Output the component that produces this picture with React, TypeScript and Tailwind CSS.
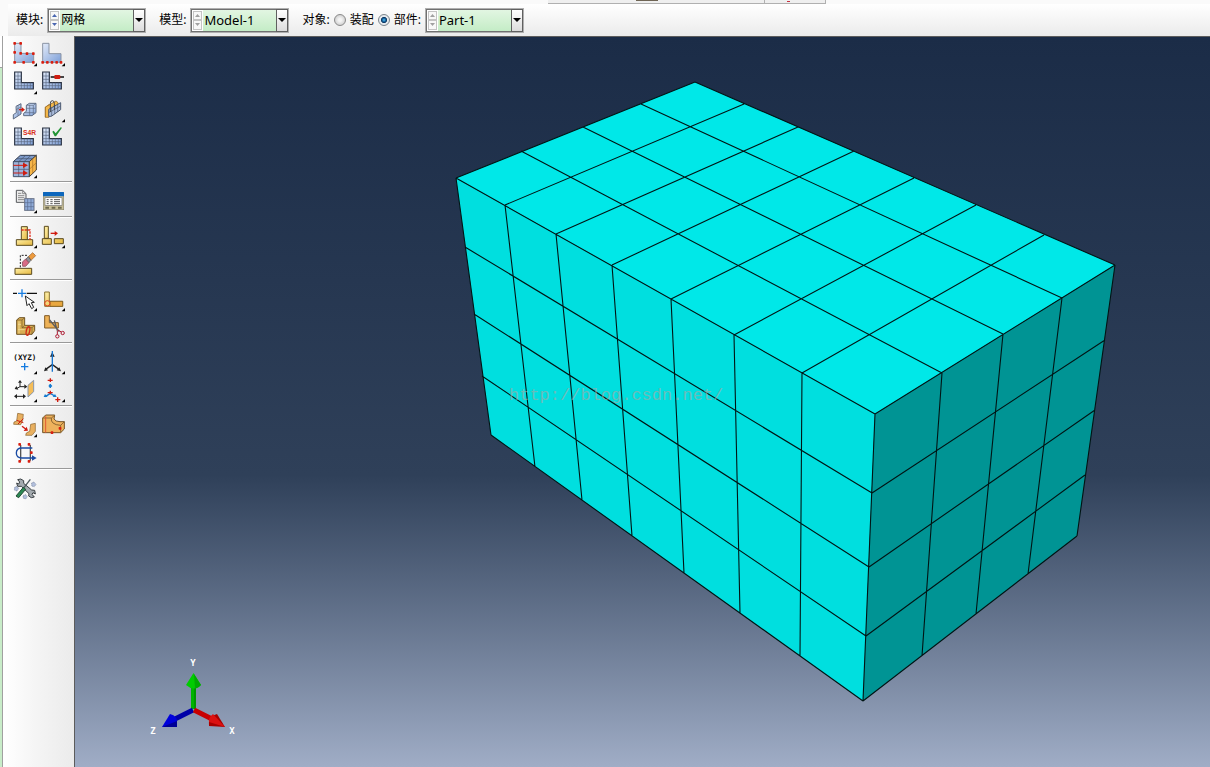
import { useState, type ReactNode } from "react";

type Point = [number, number];

const line = (a: Point, b: Point) => `M${a[0]} ${a[1]}L${b[0]} ${b[1]}`;
const poly = (pts: Point[]) => pts.map((p) => p.join(",")).join(" ");

/* Mesh nodes along the edges of the block. */
const topLeft: Point[] = [[456, 178], [505, 205], [556, 234], [612, 265], [671, 299], [734, 335], [802, 373], [875, 414]];
const topRight: Point[] = [[695, 82], [744, 104], [798, 127], [854, 151], [914, 178], [976, 205], [1044, 235], [1115, 265]];
const backEdge: Point[] = [[456, 178], [521, 151], [583, 127], [641, 104], [695, 82]];
const frontEdge: Point[] = [[875, 414], [942, 373], [1003, 334], [1062, 298], [1115, 265]];
const bottomLeft: Point[] = [[491, 435], [535, 467], [582, 500], [632, 536], [684, 573], [740, 613], [800, 656], [863, 701]];
const bottomRight: Point[] = [[863, 701], [922, 656], [976, 614], [1028, 574], [1077, 536]];
const leftPost: Point[] = [[456, 178], [465, 247], [474, 314], [482, 376], [491, 435]];
const midPost: Point[] = [[875, 414], [872, 493], [869, 567], [866, 636], [863, 701]];
const rightPost: Point[] = [[1115, 265], [1105, 340], [1095, 410], [1085, 475], [1077, 536]];

const meshLines = [
  ...topLeft.map((p, i) => line(p, topRight[i])),
  ...backEdge.map((p, i) => line(p, frontEdge[i])),
  ...topLeft.map((p, i) => line(p, bottomLeft[i])),
  ...frontEdge.map((p, i) => line(p, bottomRight[i])),
  ...leftPost.map((p, i) => line(p, midPost[i])),
  ...midPost.map((p, i) => line(p, rightPost[i])),
].join("");

function Scene() {
  return (
    <svg viewBox="75 37 1135 730" className="block h-full w-full" role="img" aria-label="Part-1">
      <polygon points={poly([topLeft[0], topRight[0], topRight[7], topLeft[7]])} fill="#00e8e8" />
      <polygon points={poly([topLeft[0], topLeft[7], bottomLeft[7], bottomLeft[0]])} fill="#00dfdf" />
      <polygon points={poly([topLeft[7], topRight[7], rightPost[4], midPost[4]])} fill="#009494" />
      <path d={meshLines} stroke="#001414" strokeWidth="1.1" fill="none" />
      <text x="509" y="400" fontSize="17" fill="#a4a8a4" fillOpacity="0.65" className="font-['Liberation_Mono',monospace]">
        http://blog.csdn.net/
      </text>
      <g>
        <path d="M193.500 709V684" stroke="#00b400" strokeWidth="5" />
        <path d="M195 709V684" stroke="#008c00" strokeWidth="1.500" />
        <path d="M193.500 673L201 685Q194 692 186 685Z" fill="#00cc00" />
        <path d="M194 674L201 685Q198 689 195 688Z" fill="#00a800" />
        <path d="M193 710L175 719" stroke="#0000a8" strokeWidth="5" />
        <path d="M162 727L170 714Q178 715 177 726Z" fill="#0000dc" />
        <path d="M162 727L177 721L177 727Z" fill="#000096" />
        <path d="M194 710L212 719" stroke="#c80000" strokeWidth="5" />
        <path d="M225 727L217 714Q208 716 209 726Z" fill="#a80000" />
        <path d="M225 727L213 714Q208 718 209 722Z" fill="#dc1010" />
      </g>
      <g fill="#fff" fontSize="9" fontWeight="bold" textAnchor="middle" className="font-['DejaVu_Sans_Mono',monospace]">
        <text x="193" y="666">Y</text>
        <text x="153" y="734">Z</text>
        <text x="232" y="734">X</text>
      </g>
    </svg>
  );
}

/* Icons are drawn on an 84-unit cell whose origin is (x, y). */
interface Tool {
  label: string;
  y: number;
  more?: boolean;
  art: ReactNode;
}

const dots = (pts: Point[]) => pts.map(([x, y]) => <rect key={`${x}-${y}`} x={x - 4} y={y - 4} width="8" height="8" rx="2" fill="#d81e10" />);

function MeshL({ x, y }: { x: number; y: number }) {
  return (
    <g transform={`translate(${x} ${y})`}>
      <path d="M2 2H22V34H58V53H2Z" fill="url(#blue)" stroke="#283040" strokeWidth="3.500" />
      <path d="M12 2V53M2 14H22M2 24H22M2 34H22M2 43H58M22 34V53M31 34V53M40 34V53M49 34V53" stroke="#59677f" strokeWidth="2" fill="none" />
    </g>
  );
}

const red = "#d01c10";

const groups: Tool[][] = [
  [
    {
      label: "Seed Part", y: 12, more: true,
      art: (
        <>
          <path d="M44 22H63V52H101V79H44Z" fill="url(#blue)" stroke="#8a93a3" strokeWidth="3" />
          {dots([[44, 22], [62, 22], [44, 49], [62, 52], [81, 53], [100, 53], [44, 79], [71, 79], [100, 79]])}
        </>
      ),
    },
    {
      label: "Seed Edges", y: 12, more: true,
      art: (
        <>
          <path d="M128 22H147V53H183V79H128Z" fill="url(#blue)" stroke="#8a93a3" strokeWidth="3" />
          {dots([[128, 79], [142, 79], [156, 79], [170, 79], [183, 79]])}
        </>
      ),
    },
    { label: "Mesh Part", y: 96, more: true, art: <MeshL x={42} y={106} /> },
    {
      label: "Edit Mesh", y: 96,
      art: (
        <>
          <MeshL x={126} y={106} />
          <path d="M152 123H192" stroke="#222" strokeWidth="5" />
          <rect x="163" y="117" width="18" height="12" rx="3" fill={red} />
        </>
      ),
    },
    {
      label: "Associate Mesh", y: -36,
      art: (
        <>
          <path d="M48 -5L63 -13V18L40 33V20L49 14Z" fill="url(#blue)" stroke="#5d6b83" strokeWidth="3" />
          <path d="M79 -8L88 -14H108V14L96 23H71V16L79 10Z" fill="url(#blue)" stroke="#5d6b83" strokeWidth="3" />
          <path d="M79 -8H100V20M89 -10V22M79 1H106M74 14H104M100 -8L108 -14M54 -9V22M48 5L63 -3" stroke="#5d6b83" strokeWidth="2" fill="none" />
          <path d="M57 5H67" stroke={red} strokeWidth="4" />
          <path d="M65 -3L75 5L65 12Z" fill={red} />
        </>
      ),
    },
    {
      label: "Create Bottom-Up Mesh", y: -36, more: true,
      art: (
        <>
          <path d="M136 -2L147 -10V18L136 27Z" fill="#f0aa35" stroke="#8a5a18" strokeWidth="2" />
          <path d="M136 -3L168 -21L174 -16V-8L147 6V28H136Z" fill="#f4b84b" stroke="#8a5a18" strokeWidth="2" />
          <path d="M146 4L182 -16V5L154 25H146Z" fill="#a9bbdc" stroke="#4d5a70" strokeWidth="3" />
          <path d="M146 14L182 -6M155 -1V24M164 -6V18M173 -11V12" stroke="#4d5a70" strokeWidth="2" />
          <path d="M151 12V-13Q151 -22 157 -22T163 -13V6" fill="none" stroke="#3f4146" strokeWidth="3" />
        </>
      ),
    },
    {
      label: "Assign Element Type", y: 48,
      art: (
        <>
          <MeshL x={42} y={58} />
          <text x="69" y="81" fontSize="20" fontWeight="bold" fill="#d83020" className="font-['Liberation_Sans',sans-serif]">S4R</text>
        </>
      ),
    },
    {
      label: "Verify Mesh", y: 48,
      art: (
        <>
          <MeshL x={126} y={58} />
          <path d="M157 71L161 68L167 76L182 58L186 59L168 85H164Z" fill="#219434" />
        </>
      ),
    },
    {
      label: "Mesh Region", y: 132, more: true,
      art: (
        <>
          <path d="M40 161L61 142H109L88 161Z" fill="#7d99c8" stroke="#333d50" strokeWidth="3" />
          <path d="M40 161H88V206H40Z" fill="#9db4dc" stroke="#45536b" strokeWidth="3" />
          <path d="M88 161L109 142V186L88 206Z" fill="#f6b64a" stroke="#45413b" strokeWidth="3" />
          <path d="M56 161V206M72 161V206M40 184H88M56 161L77 142M72 161L93 142M50 152H98" stroke="#45536b" strokeWidth="2" />
          <path d="M98 152V196M88 184L109 164" stroke="#ad7324" strokeWidth="2" />
          <path d="M40 172H75M40 195H75" stroke={red} strokeWidth="3" />
          <path d="M69 164L84 172L69 180ZM69 187L84 195L69 203Z" fill={red} />
        </>
      ),
    },
  ],
  [
    {
      label: "Mesh Controls", y: 21, more: true,
      art: (
        <>
          <path d="M49 31H68L78 41V67H49Z" fill="#eee" stroke="#56585c" strokeWidth="3" />
          <path d="M68 31V41H78M54 40H64M54 47H73M54 53H73M54 59H73" stroke="#777" strokeWidth="2.500" fill="none" />
          <rect x="74" y="56" width="28" height="35" fill="#8fabd9" stroke="#6a7387" strokeWidth="3" />
          <path d="M83 56V91M93 56V91M74 68H102M74 80H102" stroke="#5a6b8c" strokeWidth="2" />
        </>
      ),
    },
    {
      label: "Manager", y: 21,
      art: (
        <>
          <rect x="130" y="37" width="61" height="52" fill="#c8bf98" stroke="#8c8669" strokeWidth="2" />
          <rect x="129" y="36" width="63" height="13" rx="2" fill="#0d67bd" />
          <rect x="135" y="53" width="51" height="23" fill="#fff" stroke="#777" strokeWidth="2" />
          <path d="M140 59H146M140 65H146M140 71H146M151 59H158M151 65H158M151 71H158M162 59H180M162 65H180M162 71H180" stroke="#555" strokeWidth="3" />
          <path d="M136 83H147M155 83H166M174 83H185" stroke="#6e6a4e" strokeWidth="6" />
        </>
      ),
    },
  ],
  [
    {
      label: "Create Partition", y: 126, more: true,
      art: (
        <>
          <path d="M64 140H82V180H64Z" fill="url(#gold)" stroke="#5b4b20" strokeWidth="3" />
          <path d="M49 179H98V196H49Z" fill="url(#gold)" stroke="#5b4b20" strokeWidth="3" />
          <path d="M64 150H90V180" fill="none" stroke="#e03020" strokeWidth="4" strokeDasharray="7 3" />
        </>
      ),
    },
    {
      label: "Split Feature", y: 126, more: true,
      art: (
        <>
          <path d="M133 139H145V175H133ZM127 176H154V193H127ZM163 176H190V191H163Z" fill="url(#gold)" stroke="#5b4b20" strokeWidth="3" />
          <path d="M152 160H168" stroke={red} strokeWidth="4" />
          <path d="M164 153L174 160L164 168Z" fill={red} />
        </>
      ),
    },
    {
      label: "Erase Feature", y: 210,
      art: (
        <>
          <path d="M45 265H95V283H45Z" fill="url(#gold)" stroke="#5b4b20" strokeWidth="3" />
          <path d="M61 262V226H82" fill="none" stroke="#222" strokeWidth="3" strokeDasharray="6 4" />
          <path d="M85 230L98 218L107 227L93 241Z" fill="#ed9b3d" stroke="#955b25" strokeWidth="2" />
          <path d="M77 238L85 230L93 241L85 249Z" fill="#8f9197" stroke="#4a4a4a" strokeWidth="2" />
          <path d="M67 246L77 237L87 248L77 259H68Z" fill="#d96c86" stroke="#793f4d" strokeWidth="2" />
        </>
      ),
    },
  ],
  [
    {
      label: "Select Edge", y: 21, more: true,
      art: (
        <>
          <path d="M39 46H51M80 46H111" stroke="#111" strokeWidth="4" />
          <path d="M54 46H78M66 34V58" stroke="#157be0" strokeWidth="4" />
          <path d="M76 54L81 83L87 77L95 92L101 88L94 74L103 73Z" fill="#fff" stroke="#222" strokeWidth="3" />
        </>
      ),
    },
    {
      label: "Combine Edges", y: 21, more: true,
      art: (
        <>
          <path d="M134 42H148V70H188V85H134Z" fill="url(#gold)" stroke="#8a7330" strokeWidth="3" />
          <path d="M150 70H188V85H150Z" fill="#e9a83f" stroke="#6e5120" strokeWidth="2" />
          <circle cx="142" cy="76" r="8" fill="none" stroke="#e23a1c" strokeWidth="3" />
        </>
      ),
    },
    {
      label: "Partition Cell", y: 105, more: true,
      art: (
        <>
          <path d="M50 126L58 119H74V142H104V158L96 169H50Z" fill="#d8ae53" stroke="#705526" strokeWidth="3" />
          <path d="M50 126H66V149H96V169M66 126L74 119M66 149L74 142M96 149L104 142" fill="none" stroke="#705526" strokeWidth="2" />
          <path d="M57 130V166M54 139H63M54 155H74" stroke="#efd78f" strokeWidth="3" />
          <ellipse cx="84" cy="159" rx="5" ry="13" transform="rotate(12 84 159)" fill="none" stroke="#d22c16" strokeWidth="4" />
        </>
      ),
    },
    {
      label: "Trim Feature", y: 105,
      art: (
        <>
          <path d="M134 113H148V134H175V150H134Z" fill="#eeb257" stroke="#805a25" strokeWidth="3" />
          <path d="M149 126L178 161M163 127L172 158" stroke="#595b5e" strokeWidth="4" />
          <circle cx="172" cy="175" r="5" fill="none" stroke="#ac1830" strokeWidth="3" />
          <circle cx="188" cy="165" r="5" fill="none" stroke="#ac1830" strokeWidth="3" />
          <path d="M172 158V170M174 156L184 162" stroke="#ac1830" strokeWidth="3" />
        </>
      ),
    },
  ],
  [
    {
      label: "Create Datum Point", y: 18, more: true,
      art: (
        <>
          <text x="40" y="54" fontSize="23" fontWeight="bold" fill="#111" className="font-['DejaVu_Sans_Mono',monospace]">(XYZ)</text>
          <path d="M63 74H85M74 63V85" stroke="#157be0" strokeWidth="4" />
        </>
      ),
    },
    {
      label: "Create Datum Axis", y: 18, more: true,
      art: (
        <>
          <path d="M157 68L137 82M157 68L177 82" stroke="#222" strokeWidth="4" />
          <path d="M132 88L136 76L144 85ZM183 88L178 76L170 85ZM150 44L157 30L164 44Z" fill="#222" />
          <path d="M157 27V89" stroke="#1775cf" strokeWidth="4" />
        </>
      ),
    },
    {
      label: "Create Datum Plane", y: 102, more: true,
      art: (
        <>
          <path d="M60 134V121M60 134H74M60 134L51 139M49 163H71" stroke="#222" strokeWidth="3" />
          <path d="M54 122L60 114L66 122ZM73 127L82 134L73 140ZM49 132L44 141L55 143ZM51 156L42 163L51 170ZM69 156L78 163L69 170Z" fill="#222" />
          <path d="M84 130L101 115V149L84 165Z" fill="#f5bd58" stroke="#8996ab" strokeWidth="3" />
        </>
      ),
    },
    {
      label: "Create Datum CSYS", y: 102, more: true,
      art: (
        <>
          <path d="M151 138V126M151 154L136 164M151 154L164 162" stroke="#157bd0" strokeWidth="4" />
          <path d="M145 132L151 125L157 132L151 138ZM131 165L135 156L143 165ZM170 165L165 156L158 165Z" fill="#157bd0" />
          <path d="M143 115H158M151 109V120M143 152H158M151 146V157M166 173H181M173 166V180" stroke={red} strokeWidth="4" />
        </>
      ),
    },
  ],
  [
    {
      label: "Virtual Topology", y: 21, more: true,
      art: (
        <>
          <path d="M53 28L70 31L68 50L62 62L41 61L42 54L50 51Z" fill="#e9b060" stroke="#86622f" strokeWidth="2" />
          <path d="M92 61L106 58V82L96 94L77 94L79 87L89 82Z" fill="#e9b060" stroke="#86622f" strokeWidth="2" />
          <path d="M50 49L70 56M54 60L70 44" stroke={red} strokeWidth="3" />
          <path d="M66 67L78 76" stroke={red} strokeWidth="4" />
          <path d="M80 68L84 80L71 81Z" fill={red} />
        </>
      ),
    },
    {
      label: "Edit Geometry", y: 21,
      art: (
        <>
          <path d="M128 42L137 33H164L162 45Q166 53 180 53L193 53V75L182 86H128Z" fill="#eeb25c" stroke="#75552a" strokeWidth="3" />
          <path d="M128 42H154Q151 62 182 64V86M154 42L164 34M182 64L193 53" fill="none" stroke="#8d6731" strokeWidth="3" />
          <path d="M137 37V86" stroke="#e05935" strokeWidth="3" />
          {dots([[156, 86], [180, 73]])}
        </>
      ),
    },
    {
      label: "Repair Topology", y: 105,
      art: (
        <>
          <path d="M62 123V170M91 123V170" stroke="#555" strokeWidth="4" />
          <path d="M97 132H66Q49 132 49 147T66 162H97" fill="none" stroke="#1a4ba4" strokeWidth="4" />
          <path d="M96 154L110 162L96 170Z" fill="#1a4ba4" />
          {dots([[59, 121], [87, 121], [59, 172], [87, 172], [94, 146]])}
        </>
      ),
    },
  ],
  [
    {
      label: "Tools", y: 210,
      art: (
        <>
          <path d="M44 250L51 247L56 254L51 261L43 258ZM95 237L102 234L108 241L103 248L95 246ZM70 274L77 272L82 278L77 285L69 282Z" fill="#b2bfdc" stroke="#6b7894" strokeWidth="2" strokeDasharray="3 2" />
          <path d="M62 225L53 227L59 234L56 240L50 237L53 247L64 247L87 269L86 276L94 281L103 279L96 271L99 266L106 270L104 259L95 258L71 238L71 230Z" fill="#a3aaaf" stroke="#393f43" strokeWidth="3" />
          <path d="M91 226L70 253" stroke="#4e5a5d" strokeWidth="4" />
          <path d="M70 250L77 256L56 281L48 276Z" fill="#2b8953" stroke="#244d37" strokeWidth="3" />
        </>
      ),
    },
  ],
];

const rightColumn = new Set([
  "Seed Edges", "Edit Mesh", "Create Bottom-Up Mesh", "Verify Mesh", "Manager", "Split Feature", "Combine Edges",
  "Trim Feature", "Create Datum Axis", "Create Datum CSYS", "Edit Geometry",
]);

function ToolButton({ tool }: { tool: Tool }) {
  const x = rightColumn.has(tool.label) ? 117 : 33;
  return (
    <button type="button" aria-label={tool.label} className="size-7 hover:bg-white">
      <svg viewBox={`${x} ${tool.y} 84 84`} className="block size-7">
        {tool.art}
        {tool.more && <path d={`M${x + 78} ${tool.y + 69}v10h-10z`} fill="#000" />}
      </svg>
    </button>
  );
}

function Toolbox() {
  return (
    <aside className="flex w-[71px] shrink-0 flex-col bg-linear-to-r from-white via-[#f4f4f4] to-[#ebebeb] pt-1 pr-0.5 pl-[7px]">
      <svg className="absolute size-0" aria-hidden="true">
        <defs>
          <linearGradient id="blue" x1="0" y1="0" x2="1" y2="1">
            <stop offset="0" stopColor="#e3ebf9" />
            <stop offset="1" stopColor="#7d9fd8" />
          </linearGradient>
          <linearGradient id="gold" x1="0" y1="0" x2="1" y2="1">
            <stop offset="0" stopColor="#fff0a8" />
            <stop offset="1" stopColor="#e5b83f" />
          </linearGradient>
        </defs>
      </svg>
      {groups.map((group, i) => (
        <div key={group[0].label}>
          {i > 0 && <div className="mt-px mb-1 h-0.5 border-t border-[#999] bg-white" />}
          <div className="grid grid-cols-[28px_28px] pl-px">
            {group.map((tool) => (
              <ToolButton key={tool.label} tool={tool} />
            ))}
          </div>
        </div>
      ))}
    </aside>
  );
}

function SpinArrow({ up, active, label, onClick }: { up?: boolean; active?: boolean; label: string; onClick?: () => void }) {
  return (
    <button type="button" aria-label={label} onClick={onClick} className="flex flex-1 items-center justify-center border border-[#c4c4c4] bg-[#f8f8f8]">
      <svg viewBox="0 0 5 3" className="h-[3px] w-[5px]">
        <path d={up ? "M0 3L2.500 0L5 3Z" : "M0 0H5L2.500 3Z"} fill={active ? "#4a66b0" : "#a0a0a0"} />
      </svg>
    </button>
  );
}

function Combo({ id, options, active }: { id: string; options: string[]; active?: boolean }) {
  const [index, setIndex] = useState(0);
  const step = (d: number) => setIndex((index + d + options.length) % options.length);
  return (
    <div className="relative flex h-[25px] w-[99px] border border-[#b0b0b0]">
      <div className="flex w-full border border-[#707070] bg-white">
        <div className="flex w-[11px] shrink-0 flex-col p-px">
          <SpinArrow up active={active} label="Previous" onClick={() => step(-1)} />
          <SpinArrow active={active} label="Next" onClick={() => step(1)} />
        </div>
        <select
          id={id}
          value={options[index]}
          onChange={(e) => setIndex(options.indexOf(e.target.value))}
          className={`min-w-0 flex-1 appearance-none bg-linear-to-b from-[#e2f6e2] to-[#c4ecc6] pl-px leading-4 text-black outline-none ${active ? "text-xs" : "text-[13px]"}`}
        >
          {options.map((o) => (
            <option key={o}>{o}</option>
          ))}
        </select>
      </div>
      <div className="pointer-events-none absolute inset-y-0 right-0 flex w-3 items-center justify-center border border-[#606060] bg-linear-to-b from-white to-[#dcdcdc]">
        <svg viewBox="0 0 8 4" className="h-1 w-2 shrink-0">
          <path d="M0 0H8L4 4Z" fill="#000" />
        </svg>
      </div>
    </div>
  );
}

function Radio({ id, checked, onChange }: { id: string; checked: boolean; onChange: () => void }) {
  return (
    <input
      id={id}
      type="radio"
      name="object"
      checked={checked}
      onChange={onChange}
      className="size-3 shrink-0 appearance-none rounded-full border border-[#8a8a8a] bg-[radial-gradient(circle,#f4f4f4_20%,#d0d0d0_75%)] checked:border-[#7c858c] checked:bg-[radial-gradient(circle_at_50%_50%,#5cc4f0_0%,#1a6ca8_22%,#0d3660_38%,#e6eaee_50%)]"
    />
  );
}

function ContextBar() {
  const [object, setObject] = useState("part");
  return (
    <header className="flex shrink-0 flex-col bg-[#fafafa] text-xs text-black">
      <div className="flex h-1 pl-[548px]">
        <div className="flex w-[278px] border-r border-b border-[#b0b0b0] bg-[#efefef]">
          <div className="ml-[88px] h-px w-[22px] bg-[#6f6555]" />
          <div className="ml-[106px] flex-1 border-l border-[#b0b0b0] pl-[22px]">
            <div className="mt-px h-px w-[3px] bg-[#c83040]" />
          </div>
        </div>
      </div>
      <div className="ml-2 flex h-8 items-center bg-linear-to-b from-white to-[#ebebeb] pl-2">
        <div className="flex items-center gap-1">
          <label htmlFor="module">模块:</label>
          <Combo id="module" options={["网格", "部件", "装配"]} active />
        </div>
        <div className="ml-[13px] flex items-center gap-1">
          <label htmlFor="model">模型:</label>
          <Combo id="model" options={["Model-1"]} />
        </div>
        <div className="ml-[13px] flex items-center gap-1">
          <span>对象:</span>
          <Radio id="assembly" checked={object === "assembly"} onChange={() => setObject("assembly")} />
          <label htmlFor="assembly">装配</label>
          <Radio id="part" checked={object === "part"} onChange={() => setObject("part")} />
          <label htmlFor="part">部件:</label>
          <Combo id="part-name" options={["Part-1"]} />
        </div>
      </div>
    </header>
  );
}

export default function App() {
  return (
    <div className="flex min-h-screen flex-col overflow-hidden bg-[#f0f0f0] font-['Noto_Sans','Noto_Sans_CJK_SC',sans-serif]">
      <ContextBar />
      <div className="flex flex-1">
        <div className="flex w-[3px] shrink-0 flex-col border-r border-[#a0a0a0]">
          <div className="h-8 border-b border-[#a0a0a0] bg-white" />
          <div className="flex-1 bg-[#c8ecc8]" />
        </div>
        <Toolbox />
        <main className="min-w-0 flex-1 border-t border-l border-[#5c5c5c] bg-linear-to-b from-[#1b2c47] via-[#2f4059] via-60% to-[#a0adc6]">
          <Scene />
        </main>
      </div>
    </div>
  );
}
